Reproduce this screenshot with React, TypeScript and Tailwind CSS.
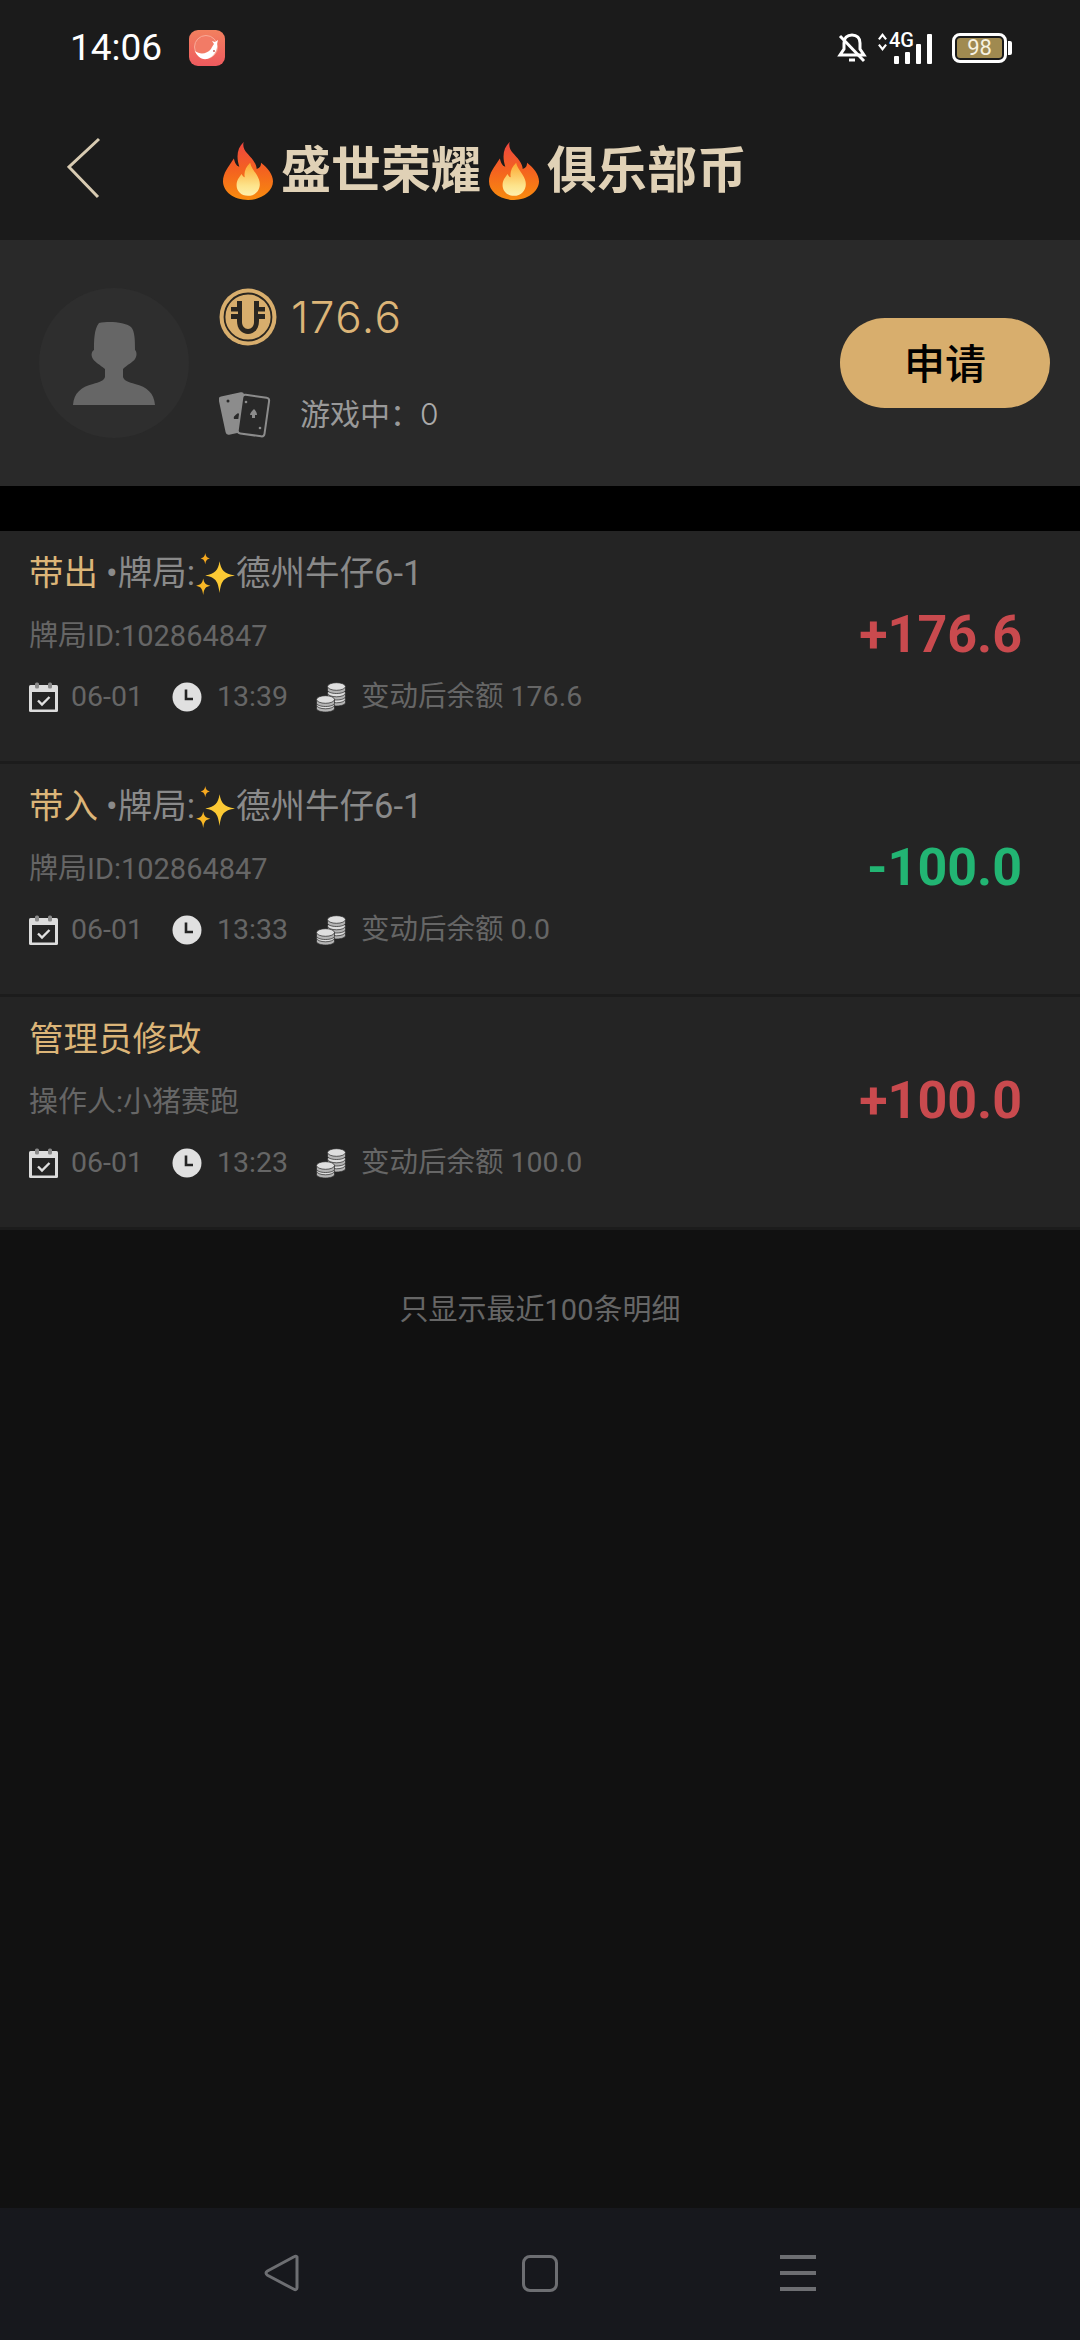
import React from "react";

const Fire = ({ cls }: { cls: string }) => (
  <svg viewBox="0 0 46 56" className={cls} preserveAspectRatio="none">
    <defs>
      <linearGradient id="fg" x1="0" y1="0" x2="0" y2="1">
        <stop offset="0" stopColor="#ee4640" />
        <stop offset="0.5" stopColor="#f4631f" />
        <stop offset="1" stopColor="#f88c0e" />
      </linearGradient>
      <linearGradient id="fi" x1="0" y1="0" x2="0" y2="1">
        <stop offset="0" stopColor="#fca62e" />
        <stop offset="0.7" stopColor="#fde48c" />
        <stop offset="1" stopColor="#fef0ac" />
      </linearGradient>
    </defs>
    <path d="M19 0C17 8 24 12 28 18 30 21 31 24 31 26 34 25 35 23 35 20 41 25 46 31 46 38 46 48 35 56 23 56 10 56 0 48 0 38 0 30 5 24 10 16 11 20 12 23 15 24 12 14 13 6 19 0z" fill="url(#fg)" />
    <path d="M25 20C26 26 31 30 33 36 36 44 31 52 23 52 15 52 11 45 13 38 14 35 16 33 17 31 18 33 19 34 20 34 19 29 21 24 25 20z" fill="url(#fi)" />
  </svg>
);

const Sparkles = () => (
  <svg viewBox="0 0 40 42" className="w-[41px] h-[43px] shrink-0">
    <path d="M24 8c1.600 9 4 12 15 14-11 2-13.400 5-15 17-1.600-12-4-15-14-17 10-2 12.400-5 14-14z" fill="#fbc934" />
    <path d="M10 0c.6 3.400 1.600 4.500 4.500 5.300C11.600 6 10.600 7 10 11 9.400 7 8.400 6 5.500 5.300 8.400 4.500 9.400 3.400 10 0z" fill="#f7a91f" />
    <path d="M8 25c.9 4.500 2.200 6 7 7-4.800 1-6.100 2.500-7 9-.9-6.500-2.200-8-7-9 4.800-1 6.100-2.500 7-7z" fill="#f9b825" />
  </svg>
);

const Calendar = () => (
  <svg viewBox="0 0 29 30" className="w-[29px] h-[30px] shrink-0">
    <rect y="3" width="29" height="27" rx="1.500" fill="#dcdcdc" />
    <rect x="3" y="10" width="23" height="17.500" fill="#242424" />
    <rect x="6" y="0.500" width="4" height="6" rx="1.500" fill="#8a8a8a" />
    <rect x="19" y="0.500" width="4" height="6" rx="1.500" fill="#8a8a8a" />
    <path d="M9 18.500l4 4L20.500 15" fill="none" stroke="#e0e0e0" strokeWidth="2.400" />
  </svg>
);

const Clock = () => (
  <svg viewBox="0 0 30 30" className="w-[30px] h-[30px] shrink-0">
    <circle cx="15" cy="15" r="14.500" fill="#e0e0e0" />
    <path d="M14 7.500V17h7" fill="none" stroke="#242424" strokeWidth="2.600" />
  </svg>
);

const Stack = ({ x, ys }: { x: number; ys: number[] }) => (
  <>
    {ys.map((y) => (
      <g key={y}>
        <path d={`M${x} ${y}v3.500c0 2 4 3.500 9 3.500s9-1.500 9-3.500V${y}z`} fill="#b4b4b4" stroke="#242424" strokeWidth="0.700" />
        <ellipse cx={x + 9} cy={y} rx="9" ry="3.800" fill="#dedede" stroke="#242424" strokeWidth="0.700" />
      </g>
    ))}
  </>
);

const Coins = () => (
  <svg viewBox="0 0 30 32" className="w-[30px] h-[32px] shrink-0">
    <Stack x={11.500} ys={[18, 12, 5.500]} />
    <Stack x={0.500} ys={[24, 18.500]} />
  </svg>
);

const MetaLine = ({ time, balance }: { time: string; balance: string }) => (
  <div className="flex items-center h-[44px] mt-[16px] text-[28.5px] text-[#666666] whitespace-nowrap">
    <Calendar />
    <span className="ml-[13px] w-[70px]">06-01</span>
    <span className="ml-[31px]"><Clock /></span>
    <span className="ml-[15px] w-[69px]">{time}</span>
    <span className="ml-[30px]"><Coins /></span>
    <span className="ml-[15px]">变动后余额 {balance}</span>
  </div>
);

type RowProps = {
  kind: string;
  game?: boolean;
  sub: string;
  time: string;
  balance: string;
  amount: string;
  color: string;
};

const Row = ({ kind, game, sub, time, balance, amount, color }: RowProps) => (
  <div className="flex justify-between h-[233px] pt-[21px] pl-[29px] bg-[#242424] border-b-[3px] border-[#1c1c1c]">
    <div className="flex flex-col">
      <div className="flex items-center h-[44px] text-[34.5px] text-[#8a8a8a] whitespace-nowrap">
        <span className="text-[#dcb578]">{kind}</span>
        {game && (
          <>
            <span className="ml-[8px]">•牌局:</span>
            <Sparkles />
            <span>德州牛仔6-1</span>
          </>
        )}
      </div>
      <div className="flex items-center h-[44px] mt-[19px] text-[29px] text-[#666666] whitespace-nowrap">{sub}</div>
      <MetaLine time={time} balance={balance} />
    </div>
    <div className={`mt-[52px] mr-[58px] h-[62px] leading-[62px] text-[52px] font-bold ${color}`}>{amount}</div>
  </div>
);

export default function App() {
  return (
    <div className="w-[1080px] h-[2340px] flex flex-col bg-[#111111] overflow-hidden font-[Roboto,'Noto_Sans_CJK_SC',sans-serif]">
      {/* status bar */}
      <div className="h-[96px] bg-[#1b1b1b] flex items-center justify-between pl-[70px] pr-[68px] text-white">
        <div className="flex items-center">
          <span className="text-[37px] w-[119px]">14:06</span>
          <svg viewBox="0 0 36 36" className="w-[36px] h-[36px]">
            <defs>
              <linearGradient id="ap" x1="0" y1="0" x2="0" y2="1">
                <stop offset="0" stopColor="#f2805f" />
                <stop offset="1" stopColor="#ee5a5e" />
              </linearGradient>
            </defs>
            <rect width="36" height="36" rx="9" fill="url(#ap)" />
            <circle cx="17" cy="17" r="11.500" fill="#f27b66" stroke="#f9b7a6" strokeWidth="0.800" />
            <path d="M6 21c5 4 12 3 16-2 1-2 2-4 3-5l-2-3 3 1 3-2-1 4c1 6-3 13-10 15-6 1-10-3-12-8z" fill="#fff" />
            <circle cx="25" cy="21" r="0.900" fill="#c0504a" />
          </svg>
        </div>
        <div className="flex items-center">
          <svg viewBox="0 0 30 32" className="w-[30px] h-[32px]" fill="none" stroke="#fff" strokeWidth="3">
            <path d="M7 11c0-5 3-8 8-8s8 3 8 8v6l4 6H3l4-6z" />
            <path d="M12 28h6" />
            <path d="M3 4l24 25" />
          </svg>
          <div className="relative w-[60px] h-[32px] ml-[10px]">
            <svg viewBox="0 0 10 20" className="absolute left-[1px] top-[1px] w-[9px] h-[18px]" fill="none" stroke="#fff" strokeWidth="2.400">
              <path d="M1 7l4-5 4 5" />
              <path d="M1 13l4 5 4-5" />
            </svg>
            <span className="absolute left-[12px] top-[-3px] text-[20px] leading-[22px] font-medium">4G</span>
            <div className="absolute left-[17px] bottom-0 flex items-end gap-[6px]">
              <div className="w-[5px] h-[8px] bg-white rounded-[1px]" />
              <div className="w-[5px] h-[12px] bg-white rounded-[1px]" />
              <div className="w-[5px] h-[20px] bg-white rounded-[1px]" />
              <div className="w-[5px] h-[30px] bg-white rounded-[1px]" />
            </div>
          </div>
          <div className="flex items-center ml-[15px]">
            <div className="w-[55px] h-[30px] border-[3px] border-white rounded-[8px] p-[2px] flex">
              <div className="flex-1 bg-[#a08a50] rounded-[3px] flex items-center justify-center text-[22px] leading-none text-[#f6f1e0]">98</div>
            </div>
            <div className="w-[4px] h-[14px] ml-[1px] bg-white rounded-r-[2px]" />
          </div>
        </div>
      </div>

      {/* header */}
      <div className="h-[144px] bg-[#1b1b1b] flex items-center pl-[67px]">
        <svg viewBox="0 0 34 62" className="w-[34px] h-[62px] shrink-0" fill="none" stroke="#d8cbb2" strokeWidth="3">
          <path d="M32 2L2 30l29 30" />
        </svg>
        <div className="ml-[122px] flex items-center text-[50px] font-bold text-[#e0d1b6] leading-none pt-[6px] whitespace-nowrap">
          <Fire cls="w-[50px] h-[58px] shrink-0 mr-[8px]" />
          <span>盛世荣耀</span>
          <Fire cls="w-[50px] h-[58px] shrink-0 ml-[8px] mr-[8px]" />
          <span>俱乐部币</span>
        </div>
      </div>

      {/* profile */}
      <div className="h-[246px] bg-[#292929] flex items-center justify-between pl-[39px] pr-[30px]">
        <div className="flex items-center">
          <div className="w-[150px] h-[150px] rounded-full bg-[#2e2e2e] flex items-center justify-center">
            <svg viewBox="0 0 82 84" className="w-[82px] h-[84px]" fill="#666666">
              <path d="M26 2C36 0 52 1 58 6 62 10 62 20 62 29 64 31 64 35 62 38 60 41 54 44 50 48L50 56C51 60 56 61 62 63 74 66 81 72 82 84H0C1 72 8 66 20 63 26 61 31 60 32 56L32 48C27 44 22 41 20 38 18 35 18 31 21 29 21 20 21 8 26 2z" />
            </svg>
          </div>
          <div className="ml-[30px] flex flex-col">
            <div className="flex items-center h-[58px]">
              <svg viewBox="0 0 58 58" className="w-[58px] h-[58px] shrink-0">
                <circle cx="29" cy="29" r="28.500" fill="#d8ae6d" />
                <circle cx="29" cy="29" r="23.500" fill="none" stroke="#2a2620" strokeWidth="1.800" />
                <path d="M18 13h22v20c0 8-5 13-11 13s-11-5-11-13z" fill="#2a2620" />
                <path d="M23 13h12v21c0 4-2.500 7-6 7s-6-3-6-7z" fill="#d8ae6d" />
                <path d="M12 19h6v12h-6z" fill="#2a2620" />
                <path d="M40 19h6v12h-6z" fill="#2a2620" />
                <path d="M12 23.500h7v2.500h-7zM39 23.500h7v2.500h-7z" fill="#d8ae6d" />
              </svg>
              <span className="ml-[14px] text-[44px] tracking-[1.500px] font-light font-[Inter,'Noto_Sans_CJK_SC',sans-serif] text-[#dcb578]">176.6</span>
            </div>
            <div className="flex items-center mt-[45px] h-[48px]">
              <svg viewBox="0 0 52 46" className="w-[52px] h-[46px] shrink-0">
                <rect x="3" y="2" width="26" height="39" rx="3" transform="rotate(-12 16 22)" fill="#8c8c8c" />
                <circle cx="9" cy="9" r="1.500" fill="#292929" />
                <path d="M19 21c2 2 5 3 4 6h-8c-1-3 2-4 4-6z" fill="#292929" />
                <rect x="21" y="4" width="27" height="39" rx="3" transform="rotate(8 34 23)" fill="#292929" stroke="#8c8c8c" strokeWidth="2" />
                <path d="M35 17c2 2 3 4 3 6h-2v3h-3v-3h-2c0-2 2-4 4-6z" fill="#8c8c8c" />
                <circle cx="27" cy="10" r="1.300" fill="#8c8c8c" />
                <circle cx="41" cy="36" r="1.300" fill="#8c8c8c" />
              </svg>
              <span className="ml-[29px] text-[30px] text-[#999999]">游戏中：</span>
              <span className="text-[30px] font-[Inter,sans-serif] font-light text-[#aaaaaa]">0</span>
            </div>
          </div>
        </div>
        <div className="w-[210px] h-[90px] pt-[5px] rounded-full bg-[#d8ae6d] flex items-center justify-center text-[41px] font-medium text-black">申请</div>
      </div>

      <div className="h-[45px] bg-black" />

      <Row kind="带出" game sub="牌局ID:102864847" time="13:39" balance="176.6" amount="+176.6" color="text-[#c94a4e]" />
      <Row kind="带入" game sub="牌局ID:102864847" time="13:33" balance="0.0" amount="-100.0" color="text-[#22b573]" />
      <Row kind="管理员修改" sub="操作人:小猪赛跑" time="13:23" balance="100.0" amount="+100.0" color="text-[#c94a4e]" />

      <div className="mt-[60px] h-[40px] leading-[40px] text-center text-[29px] text-[#666666]">只显示最近100条明细</div>
      <div className="flex-1" />

      {/* nav */}
      <div className="h-[132px] bg-[#17181d] flex items-center pl-[264px] pr-[264px] justify-between pb-[2px]">
        <svg viewBox="0 0 36 38" className="w-[36px] h-[38px]" fill="none" stroke="#6d6e72" strokeWidth="3" strokeLinejoin="round">
          <path d="M33 3c-.8-1-1.800-1-3-.3L3.500 17c-2 1.200-2 3 0 4.200L30 35.300c1.500.8 3 .2 3-1.500z" />
        </svg>
        <div className="w-[36px] h-[37px] rounded-[8px] border-[3px] border-[#6d6e72]" />
        <div className="w-[36px] h-[36px] flex flex-col justify-between">
          <div className="h-[4px] bg-[#6d6e72]" />
          <div className="h-[4px] bg-[#6d6e72]" />
          <div className="h-[4px] bg-[#6d6e72]" />
        </div>
      </div>
    </div>
  );
}
